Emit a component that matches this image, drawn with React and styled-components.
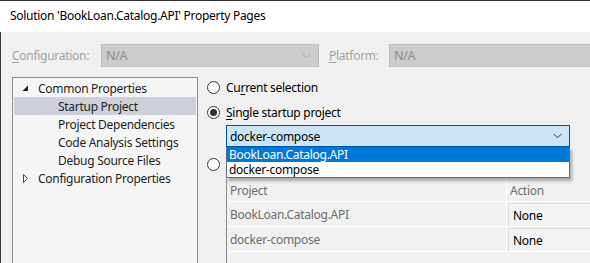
import React from 'react'
import styled, { createGlobalStyle } from 'styled-components'

const GlobalStyle = createGlobalStyle`
  body {
    margin: 0;
    background: #f0f0f0;
    font-family: 'Noto Sans', 'Open Sans', sans-serif;
    font-size: 12px;
    letter-spacing: -0.28px;
  }
`

const Window = styled.div`
  width: 590px;
  height: 263px;
  overflow: hidden;
  display: flex;
  flex-direction: column;
  background: #f0f0f0;
  color: #1e1e1e;
`

const TitleBar = styled.div`
  flex: none;
  background: #fff;
  border-top: 1px solid #2e2e2e;
  padding-left: 10px;
  display: flex;
  align-items: center;
  color: #000;
  padding-bottom: 2px;
  box-sizing: border-box;
  height: 32px;
`

const Body = styled.div`
  flex: 1;
  border-left: 1px solid #3c3c3c;
  padding: 12px 0 0 11px;
  display: flex;
  flex-direction: column;
  min-height: 0;
`

const ConfigRow = styled.div`
  display: flex;
  align-items: center;
  height: 23px;
  flex: none;
`

const Label = styled.span`
  color: #a0a0a0;
  width: ${p => p.w}px;
  flex: none;
  u {
    text-decoration: underline;
    text-underline-offset: 2px;
  }
`

const DisabledCombo = styled.div`
  height: 23px;
  box-sizing: border-box;
  width: ${p => (p.w ? `${p.w}px` : 'auto')};
  flex: ${p => (p.w ? 'none' : '1')};
  background: #cccccc;
  border: 1px solid #c2c2c2;
  display: flex;
  align-items: center;
  justify-content: space-between;
  padding: 0 7px 0 4px;
  color: #8a8a8a;
  font-size: 12.5px;
  margin-right: ${p => (p.w ? '10px' : '-20px')};
`

const Chevron = ({ color = '#a6a6a6' }) => (
  <svg width="9" height="6" viewBox="0 0 9 6">
    <polyline points="0.5,0.8 4.5,4.8 8.5,0.8" fill="none" stroke={color} strokeWidth="1" />
  </svg>
)

const Main = styled.div`
  display: flex;
  margin-top: 10px;
  flex: 1;
  min-height: 0;
`

const Tree = styled.div`
  width: 186px;
  flex: none;
  box-sizing: border-box;
  border: 1px solid #8c8c8c;
  border-bottom: none;
  background: #f5f5f5;
  padding: 1px 1px 0;
  margin-right: 9px;
`

const TreeItem = styled.div`
  height: 18px;
  display: flex;
  align-items: center;
  padding-left: ${p => p.indent}px;
  background: ${p => (p.selected ? '#cdd0db' : 'transparent')};
  color: #1e1e1e;
  white-space: nowrap;
`

const Expander = styled.span`
  width: 16px;
  margin-left: 8px;
  display: inline-flex;
  align-items: center;
`

const Right = styled.div`
  flex: 1;
  display: flex;
  flex-direction: column;
  min-width: 0;
  padding-top: 2px;
`

const RadioRow = styled.div`
  display: flex;
  align-items: center;
  height: 16px;
  margin-top: ${p => p.mt || 0}px;
  margin-bottom: ${p => p.mb || 0}px;
  color: #000;
  u {
    text-decoration: underline;
    text-underline-offset: 2px;
  }
`

const RadioCircle = styled.span`
  width: 13px;
  height: 13px;
  box-sizing: border-box;
  border-radius: 50%;
  border: 1px solid #333;
  background: #fff;
  margin-right: 6px;
  display: inline-flex;
  align-items: center;
  justify-content: center;
  flex: none;
  &::after {
    content: '';
    width: 7px;
    height: 7px;
    border-radius: 50%;
    background: ${p => (p.checked ? '#333' : 'transparent')};
  }
`

const ComboWrap = styled.div`
  position: relative;
  margin-left: 19px;
  width: 344px;
  margin-top: 5px;
`

const ActiveCombo = styled.div`
  height: 22px;
  box-sizing: border-box;
  border: 1px solid #0054a6;
  background: #cce4f7;
  display: flex;
  align-items: center;
  justify-content: space-between;
  padding: 0 7px 0 3px;
  color: #000;
`

const DropList = styled.div`
  position: absolute;
  top: 22px;
  left: 0;
  right: 0;
  background: #fff;
  border: 1px solid #5a6e86;
  border-top: none;
  box-shadow: 2px 3px 3px rgba(0, 0, 0, 0.3);
  z-index: 5;
`

const DropItem = styled.div`
  height: 15px;
  line-height: 15px;
  padding-left: 2px;
  background: ${p => (p.active ? '#0078d7' : '#fff')};
  color: ${p => (p.active ? '#fff' : '#000')};
`

const Grid = styled.div`
  margin-left: 19px;
  margin-top: 7px;
  margin-right: -20px;
  flex: 1;
  border-left: 1px solid #8c8c8c;
  display: flex;
  flex-direction: column;
`

const GridRow = styled.div`
  display: grid;
  grid-template-columns: 280px 1fr;
  height: ${p => p.h}px;
  border-bottom: 1px solid #fff;
  color: #6d6d6d;
`

const Cell = styled.div`
  display: flex;
  align-items: center;
  padding-left: 3px;
  border-right: ${p => (p.first ? '1px solid #fff' : 'none')};
`

const ActionCell = styled.div`
  margin: 1px 0 0 1px;
  display: flex;
  align-items: center;
  padding-left: 4px;
  background: #f3f3f3;
  border-left: 1px solid #dcdcdc;
  border-top: 1px solid #dcdcdc;
  color: #000;
`

const Spacer = styled.div`
  flex: 1;
`

export default function App() {
  return (
    <Window>
      <GlobalStyle />
      <TitleBar>Solution 'BookLoan.Catalog.API' Property Pages</TitleBar>
      <Body>
        <ConfigRow>
          <Label w={89}><u>C</u>onfiguration:</Label>
          <DisabledCombo w={218}>
            <span>N/A</span>
            <Chevron color="#a8a8a8" />
          </DisabledCombo>
          <Label w={60}><u>P</u>latform:</Label>
          <DisabledCombo>
            <span>N/A</span>
          </DisabledCombo>
        </ConfigRow>
        <Main>
          <Tree>
            <TreeItem indent={0}>
              <Expander>
                <svg width="7" height="7" viewBox="0 0 7 7">
                  <polygon points="6,0.5 6,6 0.5,6" fill="#1e1e1e" />
                </svg>
              </Expander>
              Common Properties
            </TreeItem>
            <TreeItem indent={44} selected>Startup Project</TreeItem>
            <TreeItem indent={44}>Project Dependencies</TreeItem>
            <TreeItem indent={44}>Code Analysis Settings</TreeItem>
            <TreeItem indent={44}>Debug Source Files</TreeItem>
            <TreeItem indent={0}>
              <Expander>
                <svg width="7" height="9" viewBox="0 0 7 9">
                  <polygon points="1.5,0.5 5.5,4.5 1.5,8.5" fill="none" stroke="#444" strokeWidth="1" />
                </svg>
              </Expander>
              Configuration Properties
            </TreeItem>
          </Tree>
          <Right>
            <RadioRow mb={9}>
              <RadioCircle />
              <span>Cu<u>r</u>rent selection</span>
            </RadioRow>
            <RadioRow>
              <RadioCircle checked />
              <span><u>S</u>ingle startup project</span>
            </RadioRow>
            <ComboWrap>
              <ActiveCombo>
                <span>docker-compose</span>
                <Chevron color="#333" />
              </ActiveCombo>
              <DropList>
                <DropItem active>BookLoan.Catalog.API</DropItem>
                <DropItem>docker-compose</DropItem>
              </DropList>
            </ComboWrap>
            <RadioRow mt={9}>
              <RadioCircle />
              <span><u>M</u>ultiple startup projects:</span>
            </RadioRow>
            <Grid>
              <GridRow h={22}>
                <Cell first>Project</Cell>
                <Cell>Action</Cell>
              </GridRow>
              <GridRow h={24}>
                <Cell first>BookLoan.Catalog.API</Cell>
                <ActionCell>None</ActionCell>
              </GridRow>
              <GridRow h={24}>
                <Cell first>docker-compose</Cell>
                <ActionCell>None</ActionCell>
              </GridRow>
              <Spacer />
            </Grid>
          </Right>
        </Main>
      </Body>
    </Window>
  )
}
